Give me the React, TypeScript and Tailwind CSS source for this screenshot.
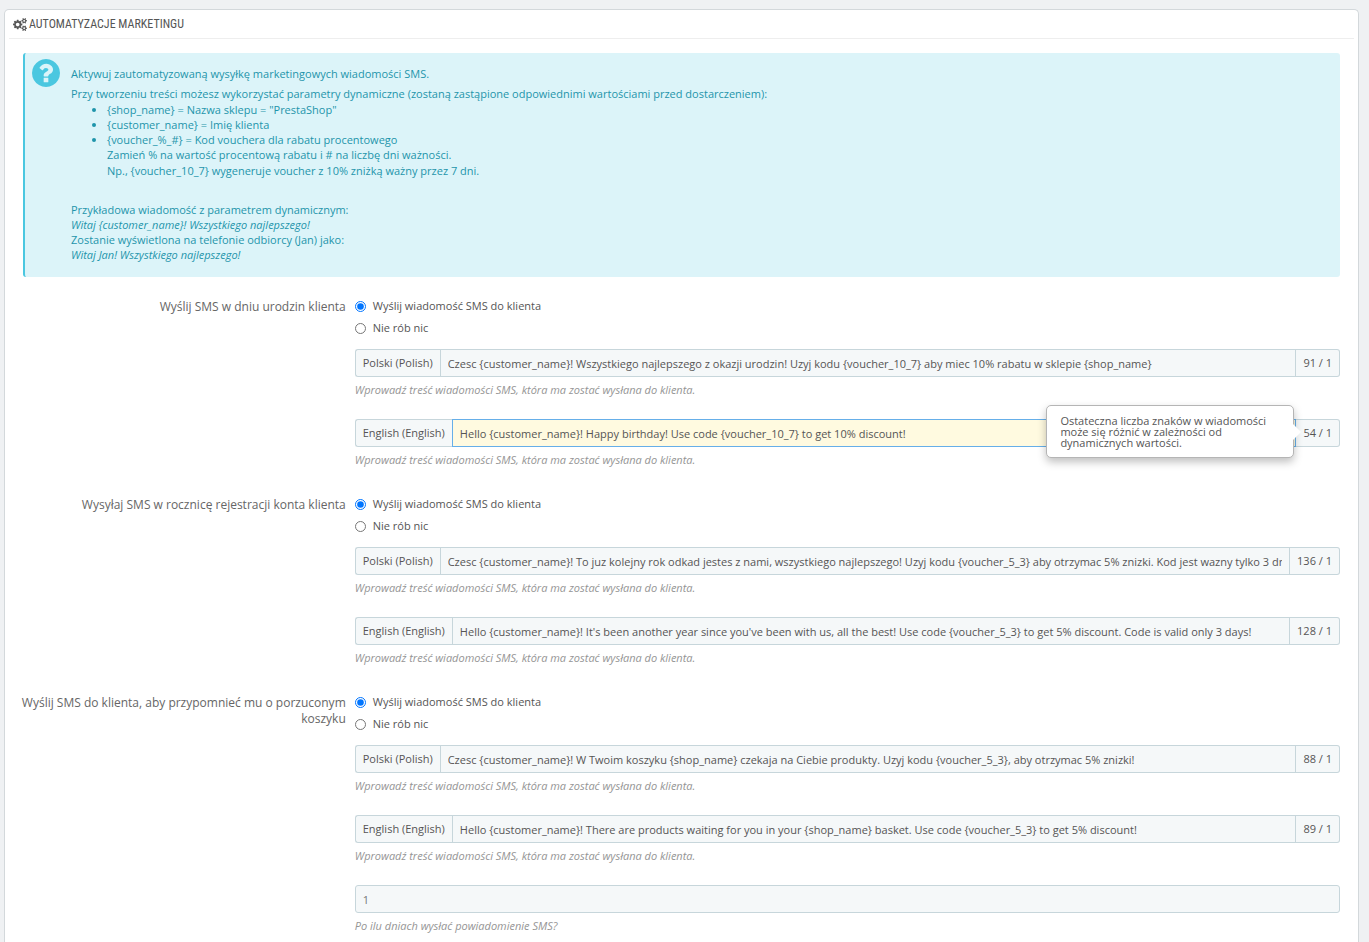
import { useState } from 'react'
import clsx from 'clsx'

type Message = {
  id: string
  lang: string
  value: string
  count: string
  active?: boolean
}

type Section = {
  id: string
  label: string
  messages: Message[]
  days?: string
}

const sections: Section[] = [
  {
    id: 'birthday',
    label: 'Wyślij SMS w dniu urodzin klienta',
    messages: [
      {
        id: 'birthday_pl',
        lang: 'Polski (Polish)',
        value:
          'Czesc {customer_name}! Wszystkiego najlepszego z okazji urodzin! Uzyj kodu {voucher_10_7} aby miec 10% rabatu w sklepie {shop_name}',
        count: '91 / 1',
      },
      {
        id: 'birthday_en',
        lang: 'English (English)',
        value: 'Hello {customer_name}! Happy birthday! Use code {voucher_10_7} to get 10% discount!',
        count: '54 / 1',
        active: true,
      },
    ],
  },
  {
    id: 'anniversary',
    label: 'Wysyłaj SMS w rocznicę rejestracji konta klienta',
    messages: [
      {
        id: 'anniversary_pl',
        lang: 'Polski (Polish)',
        value:
          'Czesc {customer_name}! To juz kolejny rok odkad jestes z nami, wszystkiego najlepszego! Uzyj kodu {voucher_5_3} aby otrzymac 5% znizki. Kod jest wazny tylko 3 dni! {shop_name}',
        count: '136 / 1',
      },
      {
        id: 'anniversary_en',
        lang: 'English (English)',
        value:
          "Hello {customer_name}! It's been another year since you've been with us, all the best! Use code {voucher_5_3} to get 5% discount. Code is valid only 3 days!",
        count: '128 / 1',
      },
    ],
  },
  {
    id: 'cart',
    label: 'Wyślij SMS do klienta, aby przypomnieć mu o porzuconym koszyku',
    messages: [
      {
        id: 'cart_pl',
        lang: 'Polski (Polish)',
        value:
          'Czesc {customer_name}! W Twoim koszyku {shop_name} czekaja na Ciebie produkty. Uzyj kodu {voucher_5_3}, aby otrzymac 5% znizki!',
        count: '88 / 1',
      },
      {
        id: 'cart_en',
        lang: 'English (English)',
        value:
          'Hello {customer_name}! There are products waiting for you in your {shop_name} basket. Use code {voucher_5_3} to get 5% discount!',
        count: '89 / 1',
      },
    ],
    days: '1',
  },
]

function CogsIcon() {
  return (
    <svg viewBox="0 0 1920 1792" className="h-[13px] w-[14px] shrink-0" fill="currentColor" aria-hidden="true">
      <path d="M896 896q0-106-75-181t-181-75-181 75-75 181 75 181 181 75 181-75 75-181zm768 512q0-52-38-90t-90-38-90 38-38 90q0 53 37.5 90.5t90.5 37.5 90.5-37.5 37.5-90.5zm0-1024q0-52-38-90t-90-38-90 38-38 90q0 53 37.5 90.5t90.5 37.5 90.5-37.5 37.5-90.5zm-384 421v185q0 10-7 19.5t-16 10.5l-155 24q-11 35-32 76 34 48 90 115 7 11 7 20 0 12-7 19-23 30-82.5 89.5t-78.5 59.5q-11 0-21-7l-115-90q-37 19-77 31-11 108-23 155-7 24-30 24h-186q-11 0-20-7.5t-10-17.5l-23-153q-34-10-75-31l-118 89q-7 7-20 7-11 0-21-8-144-133-144-160 0-9 7-19 10-14 41-53t47-61q-23-44-35-82l-152-24q-10-1-17-9.5t-7-19.5v-185q0-10 7-19.5t16-10.5l155-24q11-35 32-76-34-48-90-115-7-11-7-20 0-12 7-20 22-30 82-89t79-59q11 0 21 7l115 90q34-18 77-32 11-108 23-154 7-24 30-24h186q11 0 20 7.5t10 17.5l23 153q34 10 75 31l118-89q8-7 20-7 11 0 21 8 144 133 144 160 0 8-7 19-12 16-42 54t-45 60q23 48 34 82l152 23q10 2 17 10.5t7 19.5zm640 533v140q0 16-149 31-12 27-30 52 51 113 51 138 0 4-4 7-122 71-124 71-8 0-46-47t-52-68q-20 2-30 2t-30-2q-14 21-52 68t-46 47q-2 0-124-71-4-3-4-7 0-25 51-138-18-25-30-52-149-15-149-31v-140q0-16 149-31 13-29 30-52-51-113-51-138 0-4 4-7 4-2 35-20t59-34 30-16q8 0 46 46.5t52 67.5q20-2 30-2t30 2q51-71 92-112l6-2q4 0 124 70 4 3 4 7 0 25-51 138 17 23 30 52 149 15 149 31zm0-1024v140q0 16-149 31-12 27-30 52 51 113 51 138 0 4-4 7-122 71-124 71-8 0-46-47t-52-68q-20 2-30 2t-30-2q-14 21-52 68t-46 47q-2 0-124-71-4-3-4-7 0-25 51-138-18-25-30-52-149-15-149-31v-140q0-16 149-31 13-29 30-52-51-113-51-138 0-4 4-7 4-2 35-20t59-34 30-16q8 0 46 46.5t52 67.5q20-2 30-2t30 2q51-71 92-112l6-2q4 0 124 70 4 3 4 7 0 25-51 138 17 23 30 52 149 15 149 31z" />
    </svg>
  )
}

function HelpIcon() {
  return (
    <svg viewBox="128 128 1536 1536" className="size-7 shrink-0" fill="#4ac7e0" aria-hidden="true">
      <path d="M1024 1376v-192q0-14-9-23t-23-9h-192q-14 0-23 9t-9 23v192q0 14 9 23t23 9h192q14 0 23-9t9-23zm256-672q0-88-55.5-163t-138.5-116-170-41q-243 0-371 213-15 24 8 42l132 100q7 6 19 6 16 0 25-12 53-68 86-92 34-24 86-24 48 0 85.5 26t37.5 59q0 38-20 61t-68 45q-63 28-115.5 86.5t-52.5 125.5v36q0 14 9 23t23 9h192q14 0 23-9t9-23q0-19 21.5-49.5t54.5-49.5q32-18 49-28.5t46-35 44.5-48 28-60.5 12.5-81zm384 192q0 209-103 385.5t-279.5 279.5-385.5 103-385.5-103-279.5-279.5-103-385.5 103-385.5 279.5-279.5 385.5-103 385.5 103 279.5 279.5 103 385.5z" />
    </svg>
  )
}

function InfoBox() {
  return (
    <div className="flex gap-[11px] rounded-[3px] border-l-2 border-[#4ac7e0] bg-[#dcf4f9] pt-[6px] pb-[15px] pl-[7px] text-[#1e94ab]">
      <HelpIcon />
      <div className="pt-[7px]">
        <p className="leading-4">Aktywuj zautomatyzowaną wysyłkę marketingowych wiadomości SMS.</p>
        <p className="mt-1 leading-4">
          Przy tworzeniu treści możesz wykorzystać parametry dynamiczne (zostaną zastąpione odpowiednimi wartościami
          przed dostarczeniem):
        </p>
        <ul className="list-disc pl-9 leading-[15px]">
          <li>{'{shop_name} = Nazwa sklepu = "PrestaShop"'}</li>
          <li>{'{customer_name} = Imię klienta'}</li>
          <li>
            {'{voucher_%_#} = Kod vouchera dla rabatu procentowego'}
            <p className="leading-4">Zamień % na wartość procentową rabatu i # na liczbę dni ważności.</p>
            <p className="leading-4">{'Np., {voucher_10_7} wygeneruje voucher z 10% zniżką ważny przez 7 dni.'}</p>
          </li>
        </ul>
        <div className="mt-[23px] leading-[15px]">
          <p>Przykładowa wiadomość z parametrem dynamicznym:</p>
          <p className="italic">{'Witaj {customer_name}! Wszystkiego najlepszego!'}</p>
          <p>Zostanie wyświetlona na telefonie odbiorcy (Jan) jako:</p>
          <p className="italic">Witaj Jan! Wszystkiego najlepszego!</p>
        </div>
      </div>
    </div>
  )
}

function Hint({ children }: { children: string }) {
  return <p className="mt-[5px] leading-4 text-[#959595] italic">{children}</p>
}

function Popover() {
  return (
    <div
      role="tooltip"
      className="absolute right-[2px] bottom-[-11px] w-[248px] rounded-[5px] border border-[#b5b5b5] bg-white px-[13px] py-[9px] leading-[11px] shadow-[0_4px_9px_rgba(0,0,0,0.25)]"
    >
      Ostateczna liczba znaków w wiadomości może się różnić w zależności od dynamicznych wartości.
      <span className="absolute top-1/2 -right-2 -mt-2 border-y-8 border-l-8 border-y-transparent border-l-white" />
    </div>
  )
}

function MessageField({ message }: { message: Message }) {
  const [value, setValue] = useState(message.value)

  return (
    <div>
      <div className="flex h-7">
        <label
          htmlFor={message.id}
          className="flex items-center rounded-l-[3px] border border-r-0 border-[#c7d6db] bg-[#f5f8f9] px-[7px]"
        >
          {message.lang}
        </label>
        <div className="relative flex min-w-0 flex-1">
          <input
            id={message.id}
            type="text"
            value={value}
            onChange={(e) => setValue(e.target.value)}
            className={clsx(
              'w-full min-w-0 border px-[7px] pt-[2px] outline-none',
              message.active ? 'border-[#66afe9] bg-[#fffae0]' : 'border-[#c7d6db] bg-[#f5f8f9]',
            )}
          />
          {message.active && <Popover />}
        </div>
        <span className="flex items-center rounded-r-[3px] border border-l-0 border-[#c7d6db] bg-[#f5f8f9] px-[7px]">
          {message.count}
        </span>
      </div>
      <Hint>Wprowadź treść wiadomości SMS, która ma zostać wysłana do klienta.</Hint>
    </div>
  )
}

function FormSection({ section }: { section: Section }) {
  const [enabled, setEnabled] = useState(true)
  const [days, setDays] = useState(section.days ?? '')

  return (
    <fieldset className="grid grid-cols-4" aria-labelledby={`${section.id}_label`}>
      <div id={`${section.id}_label`} className="pt-1 pr-1 text-right text-xs leading-4 text-[#666]">
        {section.label}
      </div>
      <div className="col-span-3 px-[5px]">
        <label className="flex h-[22px] items-center gap-[7px]">
          <input
            type="radio"
            name={section.id}
            checked={enabled}
            onChange={() => setEnabled(true)}
            className="size-[11px]"
          />
          Wyślij wiadomość SMS do klienta
        </label>
        <label className="flex h-[22px] items-center gap-[7px]">
          <input
            type="radio"
            name={section.id}
            checked={!enabled}
            onChange={() => setEnabled(false)}
            className="size-[11px]"
          />
          Nie rób nic
        </label>
        <div className="mt-[10px] flex flex-col gap-[21px]">
          {section.messages.map((message) => (
            <MessageField key={message.id} message={message} />
          ))}
          {section.days && (
            <div>
              <input
                type="text"
                aria-label="Po ilu dniach wysłać powiadomienie SMS?"
                value={days}
                onChange={(e) => setDays(e.target.value)}
                className="block h-7 w-full rounded-[3px] border border-[#c7d6db] bg-[#f5f8f9] px-[7px] text-[#777] outline-none"
              />
              <Hint>Po ilu dniach wysłać powiadomienie SMS?</Hint>
            </div>
          )}
        </div>
      </div>
    </fieldset>
  )
}

export default function App() {
  return (
    <main className="flex min-h-screen flex-col bg-[#eff1f3] pt-[9px] pr-[10px] pl-1 font-['Open_Sans',sans-serif] text-[11px] text-[#555]">
      <form className="flex-1 rounded-t-[5px] border border-b-0 border-[#d3d8db] bg-white px-1 pb-1">
        <h1 className="flex h-[29px] items-center gap-[2px] border-b border-[#eee] px-1 font-['Ubuntu_Condensed','Roboto_Condensed','Open_Sans_Condensed',Roboto,sans-serif] text-xs text-[#555]">
          <CogsIcon />
          AUTOMATYZACJE MARKETINGU
        </h1>
        <div className="px-[14px] pt-[14px]">
          <InfoBox />
        </div>
        <div className="mt-[18px] flex flex-col gap-[25px] px-[9px]">
          {sections.map((section) => (
            <FormSection key={section.id} section={section} />
          ))}
        </div>
      </form>
    </main>
  )
}
